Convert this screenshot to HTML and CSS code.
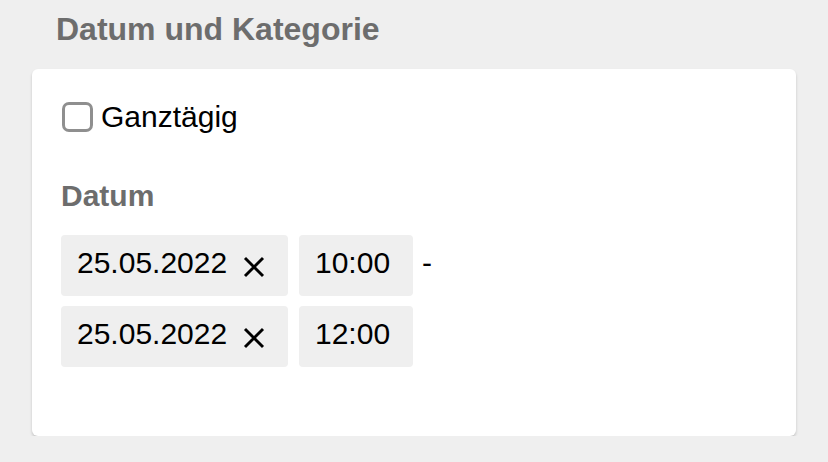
FILE: index.html
```html
<!DOCTYPE html>
<html lang="de">
<head>
<meta charset="utf-8">
<title>Datum und Kategorie</title>
<link rel="stylesheet" href="styles.css">
</head>
<body>
<main class="page">
  <h2 class="section-title">Datum und Kategorie</h2>
  <section class="card">
    <label class="check-row">
      <span class="checkbox"></span>
      <span class="check-label">Ganztägig</span>
    </label>
    <h3 class="field-label">Datum</h3>
    <div class="date-rows">
      <div class="date-row">
        <div class="date-field">
          <span class="date-value">25.05.2022</span>
          <svg class="clear-icon" viewBox="0 0 22 22" width="22" height="22" aria-hidden="true"><path d="M2 2 L20 20 M20 2 L2 20" stroke="#000" stroke-width="2.9" fill="none"/></svg>
        </div>
        <div class="time-field">10:00</div>
        <span class="dash">-</span>
      </div>
      <div class="date-row">
        <div class="date-field">
          <span class="date-value">25.05.2022</span>
          <svg class="clear-icon" viewBox="0 0 22 22" width="22" height="22" aria-hidden="true"><path d="M2 2 L20 20 M20 2 L2 20" stroke="#000" stroke-width="2.9" fill="none"/></svg>
        </div>
        <div class="time-field">12:00</div>
      </div>
    </div>
  </section>
</main>
</body>
</html>
```
FILE: styles.css
```css
html, body {
  margin: 0;
  padding: 0;
  background: #efefef;
  font-family: "Liberation Sans", Arial, sans-serif;
  color: #000;
}

.page {
  padding: 11px 32px 0 32px;
}

.section-title {
  margin: 0 0 21px 0;
  padding-left: 24px;
  font-size: 32px;
  font-weight: 700;
  line-height: 37px;
  color: #6d6d6d;
}

.card {
  background: #fff;
  border-radius: 6px;
  box-shadow: 0 2px 3px rgba(0, 0, 0, 0.18);
  padding: 31px 29px 69px 29px;
}

.check-row {
  display: flex;
  align-items: center;
  height: 34px;
  gap: 8px;
}

.checkbox {
  box-sizing: border-box;
  width: 31px;
  height: 30px;
  margin-left: 1px;
  border: 3px solid #8f8f8f;
  border-radius: 7px;
  background: #fff;
}

.check-label {
  font-size: 30px;
  line-height: 34px;
}

.field-label {
  margin: 44px 0 22px 0;
  font-size: 30px;
  font-weight: 700;
  line-height: 35px;
  color: #6d6d6d;
}

.date-rows {
  display: flex;
  flex-direction: column;
  gap: 10px;
}

.date-row {
  display: flex;
  align-items: flex-start;
  gap: 11px;
}

.date-field,
.time-field {
  box-sizing: border-box;
  height: 61px;
  background: #efefef;
  border-radius: 4px;
  font-size: 30px;
  line-height: 30px;
}

.date-field {
  display: flex;
  width: 227px;
  padding: 13px 0 0 16px;
}

.clear-icon {
  margin: 8px 0 0 16px;
  flex: none;
}

.time-field {
  width: 114px;
  padding: 13px 0 0 16px;
}

.dash {
  font-size: 30px;
  line-height: 30px;
  padding-top: 13px;
  margin-left: -2px;
}
```
